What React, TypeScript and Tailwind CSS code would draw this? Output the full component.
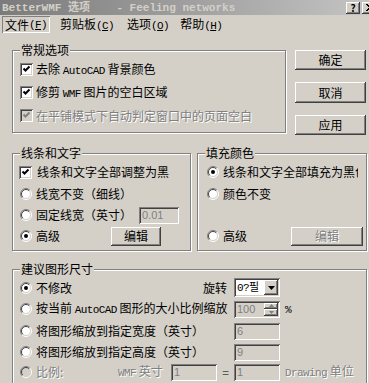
import React from "react";

const raised =
  "shadow-[inset_-1px_-1px_#404040,inset_1px_1px_#ffffff,inset_-2px_-2px_#808080,inset_2px_2px_#d4d0c8]";
const sunken =
  "shadow-[inset_1px_1px_#808080,inset_-1px_-1px_#ffffff,inset_2px_2px_#404040,inset_-2px_-2px_#d4d0c8]";
const grayText = "text-[#808080] [text-shadow:1px_1px_0_#ffffff]";

const L = ({ children }: { children: React.ReactNode }) => (
  <span className="font-['Liberation_Mono',monospace] text-[11px] tracking-[-0.6px]">{children}</span>
);

const Check = ({ disabled = false }: { disabled?: boolean }) => (
  <div
    className={`w-[13px] h-[13px] shrink-0 flex items-center justify-center ${sunken} ${
      disabled ? "bg-[#d4d0c8]" : "bg-white"
    }`}
  >
    <svg width="9" height="9" viewBox="0 0 9 9">
      <polyline
        points="1.5,3.5 3.5,5.5 7.5,1.5"
        fill="none"
        stroke={disabled ? "#808080" : "#000000"}
        strokeWidth="2"
      />
    </svg>
  </div>
);

const Radio = ({ on = false, disabled = false }: { on?: boolean; disabled?: boolean }) => (
  <svg width="12" height="12" viewBox="0 0 12 12" className="shrink-0">
    <circle cx="6" cy="6" r="5" fill={disabled ? "#d4d0c8" : "#ffffff"} />
    <path d="M9.9 2.1 A5.5 5.5 0 0 0 2.1 9.9" stroke="#808080" fill="none" />
    <path d="M2.1 9.9 A5.5 5.5 0 0 0 9.9 2.1" stroke="#ffffff" fill="none" />
    <path d="M9.2 2.8 A4.5 4.5 0 0 0 2.8 9.2" stroke="#404040" fill="none" />
    <path d="M2.8 9.2 A4.5 4.5 0 0 0 9.2 2.8" stroke="#d4d0c8" fill="none" />
    {on && <circle cx="6" cy="6" r="2" fill={disabled ? "#808080" : "#000000"} />}
  </svg>
);

const Btn = ({
  children,
  className = "",
  disabled = false,
}: {
  children: React.ReactNode;
  className?: string;
  disabled?: boolean;
}) => (
  <div
    className={`flex items-center justify-center shrink-0 bg-[#d4d0c8] ${raised} ${
      disabled ? grayText : "text-black"
    } ${className}`}
  >
    {children}
  </div>
);

const Field = ({
  children,
  className = "",
  white = false,
}: {
  children?: React.ReactNode;
  className?: string;
  white?: boolean;
}) => (
  <div
    className={`flex items-center shrink-0 pl-[3px] font-['Liberation_Sans',sans-serif] text-[11px] ${sunken} ${
      white ? "bg-white text-black" : "bg-[#d4d0c8] text-[#808080]"
    } ${className}`}
  >
    {children}
  </div>
);

const Group = ({
  label,
  className = "",
  children,
}: {
  label: string;
  className?: string;
  children: React.ReactNode;
}) => (
  <div
    className={`relative shrink-0 border border-[#808080] shadow-[1px_1px_0_#ffffff,inset_1px_1px_0_#ffffff] ${className}`}
  >
    <span className="absolute left-[7px] top-[-8px] bg-[#d4d0c8] px-[1px]">{label}</span>
    {children}
  </div>
);

const App = () => {
  return (
    <div className="w-[369px] h-[383px] overflow-hidden bg-[#d4d0c8] text-black text-[12px] leading-[14px] font-['Noto_Sans_CJK_SC',sans-serif]">
      {/* title bar */}
      <div className="h-[15px] flex items-center overflow-hidden bg-linear-to-r from-[#7b7b7b] to-[#c4c4c4]">
        <span className="pl-[2px] whitespace-pre font-bold text-[11px] text-[#d4d0c8] font-['Liberation_Mono','Noto_Sans_CJK_SC',monospace]">
          BetterWMF 选项    - Feeling networks
        </span>
        <div className="flex-1" />
        <div className="w-[23px] shrink-0 flex overflow-hidden">
          <Btn className="w-[14px] h-[12px] text-[10px] font-bold leading-none">?</Btn>
          <Btn className="ml-[2px] w-[16px] h-[12px]">
            <svg width="8" height="7" viewBox="0 0 8 7">
              <path d="M0 0 L7 7 M7 0 L0 7 M1 0 L8 7 M8 0 L1 7" stroke="#000" />
            </svg>
          </Btn>
        </div>
      </div>

      {/* menu bar */}
      <div className="h-[19px] flex items-center">
        <div className="ml-[2px] h-[17px] w-[48px] flex items-center justify-center shadow-[inset_1px_1px_#808080,inset_-1px_-1px_#ffffff]">
          文件<L>(<u>F</u>)</L>
        </div>
        <div className="ml-[10px]">
          剪贴板<L>(<u>C</u>)</L>
        </div>
        <div className="ml-[13px]">
          选项<L>(<u>O</u>)</L>
        </div>
        <div className="ml-[11px]">
          帮助<L>(<u>H</u>)</L>
        </div>
      </div>

      {/* general options + buttons */}
      <div className="flex pl-[12px] pt-[16px]">
        <Group label="常规选项" className="w-[274px] h-[83px] pl-[7px] pt-[7px]">
          <div className="h-[23px] flex items-center gap-[3px]">
            <Check />
            <span>
              去除 <L>AutoCAD</L> 背景颜色
            </span>
          </div>
          <div className="h-[23px] flex items-center gap-[3px]">
            <Check />
            <span>
              修剪 <L>WMF</L> 图片的空白区域
            </span>
          </div>
          <div className="h-[23px] flex items-center gap-[3px]">
            <Check disabled />
            <span className={grayText}>在平铺模式下自动判定窗口中的页面空白</span>
          </div>
        </Group>
        <div className="ml-[9px] flex flex-col">
          <Btn className="w-[71px] h-[20px]">确定</Btn>
          <Btn className="w-[71px] h-[21px] mt-[12px]">取消</Btn>
          <Btn className="w-[71px] h-[20px] mt-[12px]">应用</Btn>
        </div>
      </div>

      {/* lines/text + fill colour */}
      <div className="flex pl-[12px] mt-[18px]">
        <Group label="线条和文字" className="w-[179px] h-[98px] pl-[6px] pt-[7px]">
          <div className="h-[22px] flex items-center gap-[5px]">
            <Check />
            <span>线条和文字全部调整为黑</span>
          </div>
          <div className="h-[21px] flex items-center gap-[4px] pl-[1px]">
            <Radio />
            <span>线宽不变（细线）</span>
          </div>
          <div className="h-[22px] flex items-center gap-[4px] pl-[1px]">
            <Radio />
            <span>固定线宽（英寸）</span>
            <div className="flex-1" />
            <Field className="w-[40px] h-[17px] mr-[11px]">0.01</Field>
          </div>
          <div className="h-[20px] flex items-center gap-[4px] pl-[1px]">
            <Radio on />
            <span>高级</span>
            <div className="flex-1" />
            <Btn className="w-[50px] h-[19px] mr-[29px]">编辑</Btn>
          </div>
        </Group>
        <Group label="填充颜色" className="ml-[6px] w-[170px] h-[98px] pl-[9px] pt-[7px]">
          <div className="h-[22px] flex items-center gap-[4px]">
            <Radio on />
            <span className="w-[135px] overflow-hidden whitespace-nowrap">线条和文字全部填充为黑色</span>
          </div>
          <div className="h-[21px] flex items-center gap-[4px]">
            <Radio />
            <span>颜色不变</span>
          </div>
          <div className="h-[22px]" />
          <div className="h-[20px] flex items-center gap-[4px]">
            <Radio />
            <span>高级</span>
            <div className="flex-1" />
            <Btn disabled className="w-[72px] h-[19px] mr-[3px]">
              编辑
            </Btn>
          </div>
        </Group>
      </div>

      {/* suggested size */}
      <div className="pl-[12px] mt-[18px]">
        <Group label="建议图形尺寸" className="w-[355px] h-[120px] pl-[7px] pt-[7px]">
          <div className="h-[21px] flex items-center">
            <div className="w-[214px] flex items-center gap-[4px]">
              <Radio on />
              <span>不修改</span>
              <div className="flex-1" />
              <span className="mr-[7px]">旋转</span>
            </div>
            <Field white className="w-[46px] h-[19px] pr-[2px] text-[11px]">
              <span className="flex-1 font-['Liberation_Mono','Noto_Sans_CJK_KR',monospace] text-[11px] tracking-[-0.6px] whitespace-nowrap">
                0?필
              </span>
              <Btn className="w-[14px] h-[15px]">
                <svg width="7" height="4" viewBox="0 0 7 4">
                  <path d="M0 0 H7 L3.5 4 Z" fill="#000" />
                </svg>
              </Btn>
            </Field>
          </div>
          <div className="h-[22px] flex items-center">
            <div className="w-[212px] flex items-center gap-[4px] overflow-hidden whitespace-nowrap">
              <Radio />
              <span>
                按当前 <L>AutoCAD</L> 图形的大小比例缩放
              </span>
            </div>
            <Field className="ml-[2px] w-[46px] h-[17px] pr-[2px]">
              <span className="flex-1">100</span>
              <div className="w-[14px] h-[13px] flex flex-col">
                <Btn className="w-[14px] h-[6px]">
                  <svg width="5" height="3" viewBox="0 0 5 3">
                    <path d="M0 3 H5 L2.5 0 Z" fill="#808080" />
                  </svg>
                </Btn>
                <Btn className="w-[14px] h-[7px]">
                  <svg width="5" height="3" viewBox="0 0 5 3">
                    <path d="M0 0 H5 L2.5 3 Z" fill="#808080" />
                  </svg>
                </Btn>
              </div>
            </Field>
            <span className="ml-[5px]">
              <L>%</L>
            </span>
          </div>
          <div className="h-[22px] flex items-center">
            <div className="w-[214px] flex items-center gap-[4px]">
              <Radio />
              <span>将图形缩放到指定宽度（英寸）</span>
            </div>
            <Field className="w-[46px] h-[17px]">6</Field>
          </div>
          <div className="h-[20px] flex items-center">
            <div className="w-[214px] flex items-center gap-[4px]">
              <Radio />
              <span>将图形缩放到指定高度（英寸）</span>
            </div>
            <Field className="w-[46px] h-[17px]">9</Field>
          </div>
          <div className="h-[20px] flex items-center">
            <div className="w-[98px] flex items-center gap-[4px]">
              <Radio disabled />
              <span className={grayText}>比例:</span>
            </div>
            <span className={`w-[53px] whitespace-nowrap ${grayText}`}>
              <L>WMF</L> 英寸
            </span>
            <Field className="w-[46px] h-[17px]">1</Field>
            <span className="w-[17px] text-center text-[#404040]">=</span>
            <Field className="w-[46px] h-[17px]">1</Field>
            <span className={`ml-[5px] whitespace-nowrap ${grayText}`}>
              <L>Drawing</L> 单位
            </span>
          </div>
        </Group>
      </div>
    </div>
  );
};

export default App;
